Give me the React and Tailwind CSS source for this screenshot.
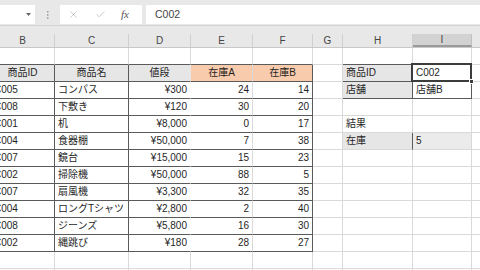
import React from 'react';
import { X, Check } from 'lucide-react';

const FONT = "font-['Liberation_Sans','Noto_Sans_CJK_JP',sans-serif]";
const GREY = 'bg-[#e7e6e6]';
const ORANGE = 'bg-[#f8cbad]';

const colW = [
  'w-[64px] -ml-[9px]',
  'w-[74px]',
  'w-[62px]',
  'w-[62px]',
  'w-[60px]',
  'w-[30px]',
  'w-[70px]',
  'w-[59px]',
  'w-[60px]',
];
const letters = ['B', 'C', 'D', 'E', 'F', 'G', 'H', 'I', 'J'];

const products = [
  ['C005', 'コンパス', '¥300', 24, 14],
  ['C008', '下敷き', '¥120', 30, 20],
  ['C001', '机', '¥8,000', 0, 17],
  ['C004', '食器棚', '¥50,000', 7, 38],
  ['C007', '鏡台', '¥15,000', 15, 23],
  ['C002', '掃除機', '¥50,000', 88, 5],
  ['C007', '扇風機', '¥3,300', 32, 35],
  ['C004', 'ロングTシャツ', '¥2,800', 2, 40],
  ['C008', 'ジーンズ', '¥5,800', 16, 30],
  ['C002', '縄跳び', '¥180', 28, 27],
];

// lookup block in H:I, by data row index
const side = {
  0: [{ t: '店舗', bg: GREY, r: 'd', b: 'd' }, { t: '店舗B', r: 'd', b: 'd' }],
  2: [{ t: '結果' }, {}],
  3: [{ t: '在庫', bg: GREY, r: 'd' }, { t: '5', bg: 'bg-[#ebebeb]' }],
};

function buildRows() {
  const rows = [];
  rows.push([{ b: 'd' }, { b: 'd' }, { b: 'd' }, { b: 'd' }, { b: 'd' }, {}, { b: 'd' }, { b: 'd' }, {}]);
  rows.push([
    { t: '商品ID', a: 'c', bg: GREY, r: 'd', b: 'd' },
    { t: '商品名', a: 'c', bg: GREY, r: 'd', b: 'd' },
    { t: '値段', a: 'c', bg: GREY, r: 'n', b: 'd' },
    { t: '在庫A', a: 'c', bg: ORANGE, b: 'd' },
    { t: '在庫B', a: 'c', bg: ORANGE, r: 'd', b: 'd' },
    {},
    { t: '商品ID', bg: GREY, r: 'd', b: 'd' },
    { t: 'C002', r: 'd', b: 'd', active: true },
    {},
  ]);
  products.forEach((p, i) => {
    const [h, iCell] = side[i] || [{}, {}];
    rows.push([
      { t: p[0], r: 'd', b: 'd' },
      { t: p[1], r: 'd', b: 'd' },
      { t: p[2], a: 'r', r: 'n', b: 'd' },
      { t: p[3], a: 'r', b: 'd' },
      { t: p[4], a: 'r', r: 'd', b: 'd' },
      {},
      h,
      iCell,
      {},
    ]);
  });
  rows.push(Array(9).fill({}));
  rows.push(Array(9).fill({}));
  return rows;
}

function Cell({ w, c }) {
  const r = c.r === 'd' ? 'border-r-[#5a5a5a]' : c.r === 'n' ? 'border-r-transparent' : 'border-r-[#d9d9d9]';
  const b = c.b === 'd' ? 'border-b-[#5a5a5a]' : 'border-b-[#d9d9d9]';
  const a = c.a === 'c' ? 'justify-center' : c.a === 'r' ? 'justify-end pr-[3px]' : 'justify-start pl-[3px]';
  return (
    <div className={`relative flex shrink-0 items-center border-r border-b ${w} ${r} ${b} ${a} ${c.bg || 'bg-white'}`}>
      <span className="whitespace-nowrap leading-none">{c.t}</span>
      {c.active && (
        <>
          <div className="absolute -left-[2px] -top-[2px] -right-[1px] -bottom-[1px] z-10 border-2 border-[#3c3c3c]" />
          <div className="absolute -right-[3px] -bottom-[3px] z-20 h-[5px] w-[5px] border border-white bg-[#3c3c3c]" />
        </>
      )}
    </div>
  );
}

export default function App() {
  const rows = buildRows();
  return (
    <div className={`h-[270px] w-[480px] overflow-hidden bg-white ${FONT} text-[10px] text-[#1f1f1f]`}>
      {/* formula bar */}
      <div className="flex h-[26px] items-end border-b border-[#d4d4d4] bg-[#e8e8e8] pb-[1px]">
        <div className="relative flex h-[19px] w-[35px] items-center justify-end bg-white pr-[4px]">
          <svg width="5" height="3" viewBox="0 0 5 3"><path d="M0 0h5L2.5 3z" fill="#666" /></svg>
        </div>
        <div className="flex h-[19px] w-[25px] items-center justify-center">
          <svg width="2" height="8" viewBox="0 0 2 8">
            <rect x="0" y="0" width="1.5" height="1.5" fill="#9a9a9a" />
            <rect x="0" y="3.2" width="1.5" height="1.5" fill="#9a9a9a" />
            <rect x="0" y="6.4" width="1.5" height="1.5" fill="#9a9a9a" />
          </svg>
        </div>
        <div className="flex h-[19px] w-[82px] items-center bg-white">
          <X size={11} strokeWidth={1.3} className="ml-[8px] text-[#a6a6a6]" />
          <Check size={11} strokeWidth={1.3} className="ml-[16px] text-[#a6a6a6]" />
          <span className="ml-[15px] font-['Liberation_Serif',serif] text-[11px] italic text-[#555]">fx</span>
        </div>
        <div className="ml-[4px] flex h-[19px] flex-1 items-center bg-white pl-[9px] text-[10.5px] text-[#444]">
          C002
        </div>
      </div>
      <div className="h-[8px] bg-[#e8e8e8]" />
      {/* column headers */}
      <div className="flex h-[14px] border-b border-[#c8c8c8] bg-[#e8e8e8]">
        {letters.map((l, i) => (
          <div
            key={l}
            className={`flex shrink-0 items-center justify-center border-r text-[10px] text-[#444] ${colW[i]} ${
              l === 'I' ? 'border-b-2 border-r-[#c0c0c0] border-b-[#9a9a9a] bg-[#d2d2d2]' : 'border-r-[#cfcfcf]'
            }`}
          >
            {l}
          </div>
        ))}
      </div>
      {/* sheet */}
      {rows.map((row, ri) => (
        <div key={ri} className="flex h-[17px]">
          {row.map((c, ci) => (
            <Cell key={ci} w={colW[ci]} c={c} />
          ))}
        </div>
      ))}
    </div>
  );
}
